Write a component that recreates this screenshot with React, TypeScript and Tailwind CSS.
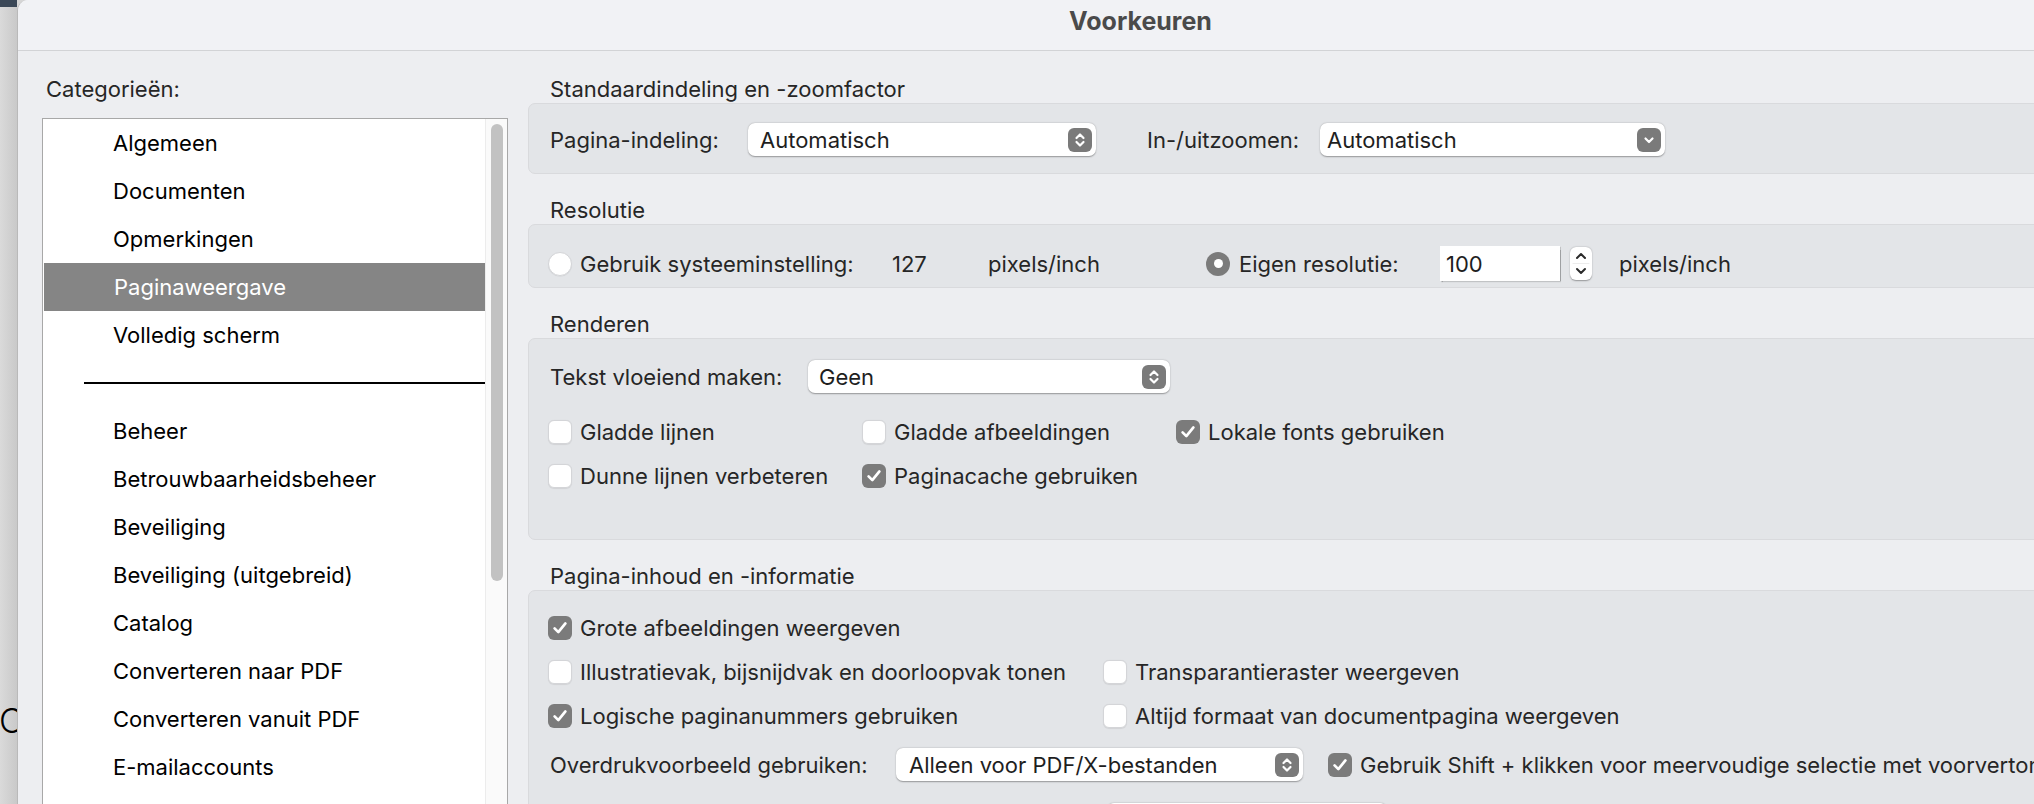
import React from 'react';

const categories = [
  'Algemeen',
  'Documenten',
  'Opmerkingen',
  'Paginaweergave',
  'Volledig scherm',
  '---',
  'Beheer',
  'Betrouwbaarheidsbeheer',
  'Beveiliging',
  'Beveiliging (uitgebreid)',
  'Catalog',
  'Converteren naar PDF',
  'Converteren vanuit PDF',
  'E-mailaccounts',
];

const UpDown = () => (
  <svg viewBox="0 0 24 24" className="w-[24px] h-[24px]" fill="none" stroke="white" strokeWidth="2.2" strokeLinecap="round" strokeLinejoin="round">
    <path d="M8.5 10 L12 6.5 L15.5 10" />
    <path d="M8.5 14 L12 17.5 L15.5 14" />
  </svg>
);

const Down = () => (
  <svg viewBox="0 0 24 24" className="w-[24px] h-[24px]" fill="none" stroke="white" strokeWidth="2.2" strokeLinecap="round" strokeLinejoin="round">
    <path d="M8.5 10.5 L12 14 L15.5 10.5" />
  </svg>
);

const Popup = ({ text, w, down, pl = 'pl-[12px]' }: { text: string; w: string; down?: boolean; pl?: string }) => (
  <div className={`${w} h-[33px] shrink-0 bg-white rounded-[7px] shadow-[0_0.5px_1.5px_rgba(0,0,0,0.35)] flex items-center justify-between ${pl} pr-[4px]`}>
    <span className="text-[#1e1e1e]">{text}</span>
    <span className="w-[24px] h-[24px] rounded-[6px] bg-[#7a7a7a] flex items-center justify-center">
      {down ? <Down /> : <UpDown />}
    </span>
  </div>
);

const Check = ({ on }: { on?: boolean }) =>
  on ? (
    <span className="w-[24px] h-[24px] shrink-0 rounded-[6px] bg-[#7b7b7b] flex items-center justify-center">
      <svg viewBox="0 0 24 24" className="w-[20px] h-[20px]" fill="none" stroke="white" strokeWidth="3.2" strokeLinecap="round" strokeLinejoin="round">
        <path d="M5.5 12.5 L10 17 L18.5 6.5" />
      </svg>
    </span>
  ) : (
    <span className="w-[24px] h-[24px] shrink-0 rounded-[6px] bg-white border border-[#d4d5d8] shadow-[0_0.5px_1px_rgba(0,0,0,0.08)]" />
  );

const CheckItem = ({ label, on, w }: { label: string; on?: boolean; w?: string }) => (
  <div className={`h-[24px] flex items-center gap-[8px] shrink-0 ${w ?? ''}`}>
    <Check on={on} />
    <span className="whitespace-nowrap">{label}</span>
  </div>
);

const Section = ({ title, first, children, box }: { title: string; first?: boolean; children: React.ReactNode; box: string }) => (
  <div className={first ? 'pt-[23px]' : 'mt-[21px]'}>
    <div className="h-[29px] pl-[22px] flex items-center text-[#262626]">{title}</div>
    <div className={`rounded-[7px] border border-[#d9dadd] bg-[#e3e5e8] ${box}`}>{children}</div>
  </div>
);

const App: React.FC = () => {
  return (
    <div className="w-[2034px] h-[804px] overflow-hidden flex bg-[#d6d6d6] text-[22px] leading-[28px]" style={{ fontFamily: 'Inter, "Noto Sans", sans-serif' }}>
      {/* desktop edge behind the window */}
      <div className="w-[17px] shrink-0 flex flex-col overflow-hidden">
        <div className="h-[7px] bg-[#3b4857]" />
        <div className="flex-1 bg-gradient-to-r from-[#dadada] to-[#c9c9c9] pt-[697px] overflow-hidden">
          <span className="block text-[34px] leading-[34px] font-light text-black -ml-[1px]">C</span>
        </div>
      </div>

      <div className="w-[2246px] shrink-0 rounded-tl-[11px] border-l border-[#b9b9b9] bg-[#edeef1] flex flex-col overflow-hidden">
        <div className="h-[51px] shrink-0 border-b border-[#d2d3d6] bg-[#f1f2f5] flex justify-center pt-[7px]">
          <span className="text-[25px] leading-[28px] font-bold text-[#4a4a4a]">Voorkeuren</span>
        </div>

        <div className="flex pl-[24px] gap-[20px]">
          {/* categories */}
          <div className="w-[466px] shrink-0 pt-[23px]">
            <div className="h-[29px] pl-[4px] flex items-center text-[#262626]">Categorieën:</div>
            <div className="mt-[15px] h-[700px] border border-[#a8a8a8] bg-white flex overflow-hidden">
              <div className="flex-1">
                {categories.map((c) =>
                  c === '---' ? (
                    <div key={c} className="h-[48px] pl-[41px] flex items-center">
                      <div className="h-[2px] w-full bg-black" />
                    </div>
                  ) : (
                    <div
                      key={c}
                      className={`h-[48px] pl-[70px] flex items-center whitespace-nowrap ${
                        c === 'Paginaweergave' ? 'bg-[#858585] text-white ml-[1px]' : 'text-black'
                      }`}
                    >
                      {c}
                    </div>
                  )
                )}
              </div>
              <div className="w-[22px] shrink-0 bg-[#fafafa] border-l border-[#ececec] pt-[5px] pl-[5px]">
                <div className="w-[12px] h-[457px] rounded-full bg-[#c2c2c2]" />
              </div>
            </div>
          </div>

          {/* settings */}
          <div className="flex-1 text-[#262626]">
            <Section title="Standaardindeling en -zoomfactor" first box="h-[71px] pt-[19px] pl-[21px]">
              <div className="flex items-center">
                <span className="w-[198px] shrink-0">Pagina-indeling:</span>
                <Popup text="Automatisch" w="w-[348px]" />
                <span className="w-[173px] shrink-0 ml-[51px]">In-/uitzoomen:</span>
                <Popup text="Automatisch" w="w-[345px]" down pl="pl-[7px]" />
              </div>
            </Section>

            <Section title="Resolutie" box="h-[64px] pt-[21px] pl-[19px]">
              <div className="flex items-center">
                <div className="w-[344px] shrink-0 flex items-center gap-[8px]">
                  <span className="w-[24px] h-[24px] rounded-full bg-white border border-[#d4d5d8] shadow-[0_0.5px_1px_rgba(0,0,0,0.08)]" />
                  <span>Gebruik systeeminstelling:</span>
                </div>
                <span className="w-[96px] shrink-0">127</span>
                <span className="w-[218px] shrink-0">pixels/inch</span>
                <div className="w-[234px] shrink-0 flex items-center gap-[9px]">
                  <span className="w-[24px] h-[24px] rounded-full bg-[#7b7b7b] flex items-center justify-center">
                    <span className="w-[9px] h-[9px] rounded-full bg-white" />
                  </span>
                  <span>Eigen resolutie:</span>
                </div>
                <div className="w-[120px] h-[35px] shrink-0 bg-white shadow-[0.5px_1px_1px_rgba(0,0,0,0.3)] pl-[6px] flex items-center text-[#1e1e1e]">100</div>
                <div className="ml-[10px] w-[22px] h-[33px] shrink-0 bg-white rounded-[6px] shadow-[0_0.5px_1.5px_rgba(0,0,0,0.35)] flex flex-col items-center justify-center">
                  <svg viewBox="0 0 22 33" className="w-[22px] h-[33px]" fill="none" stroke="#2a2a2a" strokeWidth="2" strokeLinecap="round" strokeLinejoin="round">
                    <path d="M7 11 L11 7 L15 11" />
                    <path d="M3 16.5 L19 16.5" stroke="#ececec" strokeWidth="1" />
                    <path d="M7 22 L11 26 L15 22" />
                  </svg>
                </div>
                <span className="ml-[27px]">pixels/inch</span>
              </div>
            </Section>

            <Section title="Renderen" box="h-[202px] pt-[21px] pl-[19px]">
              <div className="flex items-center pl-[2px]">
                <span className="w-[260px] shrink-0">Tekst vloeiend maken:</span>
                <div className="-ml-[2px]">
                  <Popup text="Geen" w="w-[362px]" pl="pl-[11px]" />
                </div>
              </div>
              <div className="flex mt-[27px]">
                <CheckItem label="Gladde lijnen" w="w-[314px]" />
                <CheckItem label="Gladde afbeeldingen" w="w-[314px]" />
                <CheckItem label="Lokale fonts gebruiken" on />
              </div>
              <div className="flex mt-[20px]">
                <CheckItem label="Dunne lijnen verbeteren" w="w-[314px]" />
                <CheckItem label="Paginacache gebruiken" on />
              </div>
            </Section>

            <Section title="Pagina-inhoud en -informatie" box="h-[260px] pt-[25px] pl-[19px]">
              <CheckItem label="Grote afbeeldingen weergeven" on />
              <div className="flex mt-[20px]">
                <CheckItem label="Illustratievak, bijsnijdvak en doorloopvak tonen" w="w-[555px]" />
                <CheckItem label="Transparantieraster weergeven" />
              </div>
              <div className="flex mt-[20px]">
                <CheckItem label="Logische paginanummers gebruiken" on w="w-[555px]" />
                <CheckItem label="Altijd formaat van documentpagina weergeven" />
              </div>
              <div className="flex items-center mt-[20px]">
                <span className="w-[348px] shrink-0 pl-[2px]">Overdrukvoorbeeld gebruiken:</span>
                <Popup text="Alleen voor PDF/X-bestanden" w="w-[407px]" pl="pl-[13px]" />
                <div className="ml-[25px]">
                  <CheckItem label="Gebruik Shift + klikken voor meervoudige selectie met voorvertoning" on />
                </div>
              </div>
              <div className="flex mt-[22px] pl-[559px]">
                <div className="w-[280px] h-[33px] bg-white rounded-[7px] shadow-[0_0.5px_1.5px_rgba(0,0,0,0.35)]" />
              </div>
            </Section>
          </div>
        </div>
      </div>
    </div>
  );
};

export default App;
